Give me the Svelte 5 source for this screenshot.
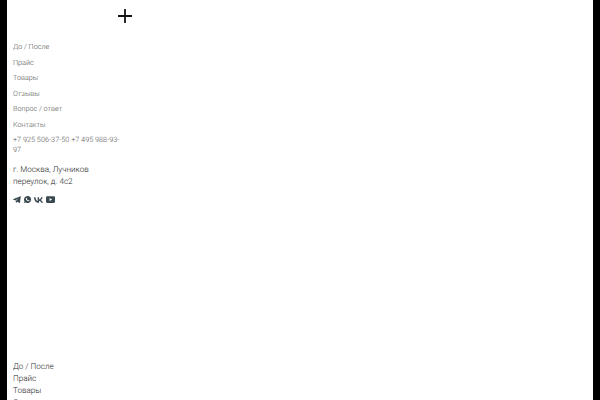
<script>
  const nav = ['До / После', 'Прайс', 'Товары', 'Отзывы', 'Вопрос / ответ', 'Контакты'];
  const bottom = ['До / После', 'Прайс', 'Товары', 'Отзывы'];
</script>

<div class="page">
  <aside class="side">
    <div class="top">
      <svg class="plus" width="14" height="14" viewBox="0 0 14 14"><path d="M7 0v14M0 7h14" stroke="#111" stroke-width="1.800" fill="none"/></svg>
    </div>
    <nav class="nav">
      {#each nav as item}<a href="#a">{item}</a>{/each}
    </nav>
    <p class="phones">+7 925 506-37-50 +7 495 988-93-97</p>
    <p class="addr">г. Москва, Лучников переулок, д. 4с2</p>
    <div class="icons">
      <svg width="8" height="7" viewBox="0 0 24 22"><path d="M23.500 1 .8 9.800c-1 .4-1 1.500 0 1.800l5.700 1.800 2.200 6.800c.3.800 1.200 1 1.800.4l3.100-2.900 5.800 4.200c.7.500 1.600.1 1.800-.7L24 1.800C24.200.7 23.900.800 23.500 1ZM9.500 14.500l-.7 4-1.300-5.500L18.500 6 9.500 14.500Z" fill="#37474f"/></svg>
      <svg width="7" height="7" viewBox="0 0 24 24"><path fill-rule="evenodd" d="M12 0a12 12 0 0 0-10.300 18L0 24l6.200-1.600A12 12 0 1 0 12 0Zm-4 6c-.6 0-1.800 1-1.800 3 0 3.500 5.200 9 9.800 9 2 0 3-1.400 3-2.400 0-.6-2.600-2-3-2-.5 0-1 1.400-1.600 1.400-1.400 0-4.400-3-4.400-4.400 0-.6 1.200-1 1.200-1.600C10.200 9 9 6 8 6Z" fill="#37474f"/></svg>
      <svg width="9" height="6" viewBox="0 0 24 15"><path d="M13 15C5 15 .4 9.400.2 0h4c.1 6.900 3.200 9.800 5.600 10.400V0h3.800v6c2.300-.3 4.800-3 5.600-6h3.800c-.6 3.700-3.300 6.400-5.200 7.500 1.900.9 5 3.300 6.200 7.500h-4.200c-.9-2.800-3.100-5-6.200-5.300V15H13Z" fill="#37474f"/></svg>
      <svg width="9" height="7" viewBox="0 0 24 18"><path fill-rule="evenodd" d="M3 0h18a3 3 0 0 1 3 3v12a3 3 0 0 1-3 3H3a3 3 0 0 1-3-3V3a3 3 0 0 1 3-3Zm6.500 5v8l7-4-7-4Z" fill="#37474f"/></svg>
    </div>
    <div class="lower">
      {#each bottom as item}<a href="#b">{item}</a>{/each}
    </div>
  </aside>
</div>

<style>
  :global(body) { margin: 0; background: #000; }
  .page {
    box-sizing: border-box;
    width: 586px;
    height: 400px;
    margin-left: 7px;
    background: #fff;
    overflow: hidden;
    font-family: Roboto, "Noto Sans", sans-serif;
    text-rendering: geometricPrecision;
  }
  .side {
    width: 107px;
    padding-left: 6px;
    opacity: 0.99;
  }
  .top {
    display: flex;
    justify-content: flex-end;
    padding-top: 9px;
    height: 33px;
    margin-right: -12px;
  }
  .nav {
    display: flex;
    flex-direction: column;
    gap: 5.500px;
  }
  .nav a {
    font-size: 7.200px;
    font-weight: 300;
    line-height: 10px;
    color: #555;
    text-decoration: none;
  }
  .phones {
    margin: 5px 0 0;
    font-size: 7.300px;
    font-weight: 300;
    line-height: 10px;
    color: #555;
    width: 108px;
  }
  .addr {
    margin: 8px 0 0;
    font-size: 8.100px;
    font-weight: 300;
    line-height: 12px;
    color: #222;
    width: 82px;
  }
  .icons {
    display: flex;
    align-items: center;
    gap: 3px;
    margin-top: 8px;
    height: 10px;
  }
  .lower {
    display: flex;
    flex-direction: column;
    margin-top: 155px;
  }
  .lower a {
    font-size: 8.100px;
    font-weight: 300;
    line-height: 12px;
    color: #222;
    text-decoration: none;
  }
</style>
